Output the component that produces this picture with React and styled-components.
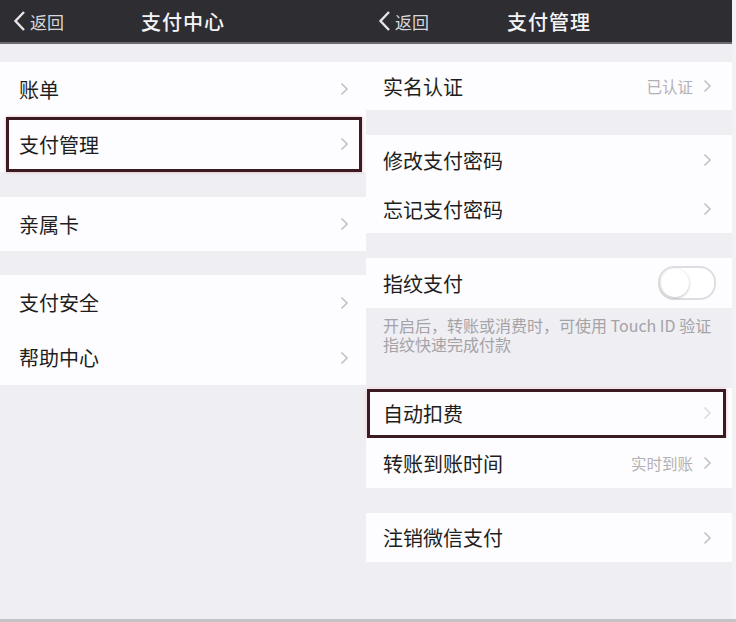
import React from "react";
import styled, { createGlobalStyle } from "styled-components";

const Global = createGlobalStyle`
  html, body { margin: 0; padding: 0; background: #efeef2; }
  body { font-family: "Noto Sans CJK SC", "Noto Sans", sans-serif; }
`;

const Page = styled.div`
  width: 736px;
  height: 622px;
  display: grid;
  grid-template-columns: 366px 366px;
  padding-right: 4px;
  box-sizing: border-box;
  background: #f2f1f4;
  border-bottom: 3px solid #c4c3c7;
  overflow: hidden;
`;

const Panel = styled.div`
  display: flex;
  flex-direction: column;
  background: #efeef2;
  min-height: 0;
`;

const Nav = styled.div`
  height: 42px;
  background: #2e2d32;
  border-bottom: 2px solid #6a696e;
  display: grid;
  grid-template-columns: 1fr auto 1fr;
  align-items: center;
  flex-shrink: 0;
`;

const Back = styled.div`
  display: flex;
  align-items: center;
  gap: 4px;
  padding-left: ${p => p.$pl}px;
  color: #d8d8da;
  font-size: 17px;
`;

const Title = styled.div`
  color: #f4f4f6;
  font-size: 20px;
  font-weight: 500;
  letter-spacing: 1px;
`;

const Gap = styled.div`
  height: ${p => p.$h}px;
  flex-shrink: 0;
`;

const Row = styled.div`
  position: relative;
  height: ${p => p.$h}px;
  flex-shrink: 0;
  background: #fdfcfe;
  display: flex;
  align-items: center;
  justify-content: space-between;
  padding: 0 ${p => p.$pr}px 0 ${p => p.$pl}px;
  &::after {
    content: "";
    display: ${p => (p.$mark ? "block" : "none")};
    position: absolute;
    top: 1px;
    bottom: 0;
    left: ${p => p.$ml}px;
    right: ${p => p.$mr}px;
    border: 3px solid #3b1b22;
    box-shadow: 0 0 3px rgba(200, 60, 90, 0.35);
    pointer-events: none;
  }
`;

const Label = styled.span`
  font-size: 20px;
  color: #1e1e20;
`;

const Right = styled.div`
  display: flex;
  align-items: center;
  gap: 10px;
`;

const Value = styled.span`
  font-size: 15.5px;
  color: #b2b1b5;
`;

const Note = styled.div`
  flex-shrink: 0;
  height: 52px;
  padding: 8px 0 0 17px;
  box-sizing: border-box;
  width: 352px;
  font-size: 16px;
  line-height: 19px;
  color: #a4a3a8;
`;

const Toggle = styled.div`
  width: 54px;
  height: 30px;
  border-radius: 16px;
  border: 2px solid #dedde1;
  background: #fff;
  position: relative;
  margin-right: -4px;
  &::before {
    content: "";
    position: absolute;
    left: 1px;
    top: 1px;
    width: 28px;
    height: 28px;
    border-radius: 50%;
    box-shadow: 0 1px 3px rgba(0,0,0,0.25);
    background: #fff;
  }
`;

const Chevron = ({ color = "#c2c1c5" }) => (
  <svg width="9" height="14" viewBox="0 0 9 14">
    <path d="M1.5 1.5 L7 7 L1.5 12.5" fill="none" stroke={color} strokeWidth="1.6" />
  </svg>
);

const BackArrow = () => (
  <svg width="13" height="22" viewBox="0 0 13 22">
    <path d="M11 2 L2.5 11 L11 20" fill="none" stroke="#e6e6e8" strokeWidth="2.4" />
  </svg>
);

const Header = ({ title, pl }) => (
  <Nav>
    <Back $pl={pl}>
      <BackArrow />
      返回
    </Back>
    <Title>{title}</Title>
    <div />
  </Nav>
);

const Item = ({ label, value, h, pl, pr, mark, ml, mr, chevron, children }) => (
  <Row $h={h} $pl={pl} $pr={pr} $mark={mark} $ml={ml} $mr={mr}>
    <Label>{label}</Label>
    {children || (
      <Right>
        {value && <Value>{value}</Value>}
        <Chevron color={chevron} />
      </Right>
    )}
  </Row>
);

export default function App() {
  const L = { pl: 19, pr: 17 };
  const R = { pl: 17, pr: 20 };
  return (
    <>
      <Global />
      <Page>
        <Panel>
          <Header title="支付中心" pl={13} />
          <Gap $h={18} />
          <Item label="账单" h={54} {...L} />
          <Item label="支付管理" h={56} {...L} mark ml={6} mr={4} />
          <Gap $h={25} />
          <Item label="亲属卡" h={54} {...L} />
          <Gap $h={24} />
          <Item label="支付安全" h={55} {...L} />
          <Item label="帮助中心" h={55} {...L} />
        </Panel>
        <Panel>
          <Header title="支付管理" pl={12} />
          <Gap $h={18} />
          <Item label="实名认证" value="已认证" h={48} {...R} />
          <Gap $h={25} />
          <Item label="修改支付密码" h={50} {...R} />
          <Item label="忘记支付密码" h={48} {...R} />
          <Gap $h={25} />
          <Item label="指纹支付" h={50} {...R}>
            <Toggle />
          </Item>
          <Note>开启后，转账或消费时，可使用 Touch ID 验证指纹快速完成付款</Note>
          <Gap $h={28} />
          <Item label="自动扣费" h={50} {...R} mark ml={1} mr={6} chevron="#dcdbde" />
          <Item label="转账到账时间" value="实时到账" h={50} {...R} />
          <Gap $h={25} />
          <Item label="注销微信支付" h={49} {...R} />
        </Panel>
      </Page>
    </>
  );
}
